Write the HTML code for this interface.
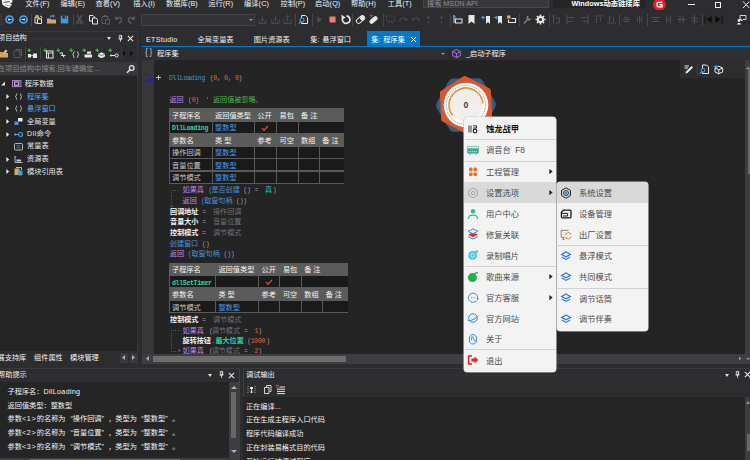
<!DOCTYPE html>
<html><head><meta charset="utf-8">
<style>
*{box-sizing:border-box;margin:0;padding:0}
html,body{width:750px;height:460px;overflow:hidden;background:#2d2d30}
body{position:relative;font-family:"Liberation Sans","Noto Sans CJK SC",sans-serif;font-size:7.2px;color:#f1f1f1;line-height:1}
.a{position:absolute;white-space:nowrap}
.t{position:absolute;white-space:nowrap;line-height:10px;height:10px}
.mono{font-family:"Liberation Mono","Noto Sans CJK SC",monospace;font-size:6.5px;letter-spacing:-0.3px}
.sep{position:absolute;width:1px;background:#46464a;height:12px}
svg{position:absolute;overflow:visible}
</style></head><body>

<div id="menubar" class="a" style="left:0;top:0;width:750px;height:10px;background:#2d2d30">
 <svg style="left:0;top:0" width="14" height="9" viewBox="0 0 14 9"><path d="M1.8 0 L12.4 0 L12.3 2.6 L9.8 3.3 L12 4.6 L9.2 8 L5 6.6 L2.3 4.4Z" fill="#f6f6f6"/><path d="M3.6 2.4 L9.8 1.7" stroke="#2d2d30" stroke-width="0.9"/><path d="M5 5 L10.6 5.6" stroke="#2d2d30" stroke-width="0.4"/></svg>
 <span class="t" style="left:25.3px;top:-1.3px;letter-spacing:0.12px">文件(F)</span>
 <span class="t" style="left:60.5px;top:-1.3px;letter-spacing:0.12px">编辑(E)</span>
 <span class="t" style="left:95.5px;top:-1.3px;letter-spacing:0.12px">查看(V)</span>
 <span class="t" style="left:133.3px;top:-1.3px;letter-spacing:0.12px">插入(I)</span>
 <span class="t" style="left:166px;top:-1.3px;letter-spacing:0.12px">数据库(B)</span>
 <span class="t" style="left:208.2px;top:-1.3px;letter-spacing:0.12px">运行(R)</span>
 <span class="t" style="left:244px;top:-1.3px;letter-spacing:0.12px">编译(C)</span>
 <span class="t" style="left:280.6px;top:-1.3px;letter-spacing:0.12px">控制(P)</span>
 <span class="t" style="left:315px;top:-1.3px;letter-spacing:0.12px">启动(Q)</span>
 <span class="t" style="left:351px;top:-1.3px;letter-spacing:0.12px">帮助(H)</span>
 <span class="t" style="left:387.7px;top:-1.3px;letter-spacing:0.12px">工具(T)</span>
 <div class="a" style="left:423px;top:-2px;width:126px;height:10px;background:#38383c;border:1px solid #47474b"></div>
 <span class="t" style="left:427px;top:-1.3px;color:#8f8f92">搜索 MSDN API</span>
 <div class="a" style="left:553px;top:0;width:93px;height:8px;background:#252527"></div>
 <span class="t" style="left:571.5px;top:-1.5px;font-weight:bold;color:#fff;font-size:7.3px">Windows动态链接库</span>
 <svg style="left:653px;top:-2px" width="13" height="13" viewBox="0 0 13 13"><circle cx="6.5" cy="6.5" r="6.4" fill="#e5202a"/><path d="M9.2 4.4 L5.2 4.4 Q4 4.4 4 5.6 L4 7.6 Q4 8.8 5.2 8.8 L9 8.8 L9 6.6 L6.4 6.6" fill="none" stroke="#fff" stroke-width="1.3"/></svg>
 <div class="a" style="left:687.5px;top:4px;width:7px;height:1px;background:#f1f1f1"></div>
 <div class="a" style="left:714.5px;top:1.5px;width:6.5px;height:6px;border:1px solid #f1f1f1"></div>
 <svg style="left:742px;top:1px" width="8" height="8" viewBox="0 0 8 8"><path d="M1 0.5 L7.5 7 M7.5 0.5 L1 7" stroke="#f1f1f1" stroke-width="1"/></svg>
</div>

<div id="toolbar" class="a" style="left:0;top:10px;width:750px;height:21px;background:#2d2d30">
<div class="a" style="left:0.5px;top:4px;width:1px;height:11px;background:repeating-linear-gradient(#5a5a5e 0 1px,transparent 1px 2px)"></div>
<svg style="left:4.2px;top:3.5px" width="11" height="11" viewBox="0 0 11 11"><circle cx="5.5" cy="5.5" r="3.5" fill="#1c2a3a" stroke="#4fa6ee" stroke-width="1.7"/><path d="M4 5.5 L7.4 5.5 M5.4 4.2 L4 5.5 L5.4 6.8" stroke="#e8f4ff" stroke-width="0.9" fill="none"/></svg>
<svg style="left:17.5px;top:3.5px" width="11" height="11" viewBox="0 0 11 11"><circle cx="5.5" cy="5.5" r="3.5" fill="#1c2a3a" stroke="#4fa6ee" stroke-width="1.7"/><path d="M3.6 5.5 L7 5.5 M5.6 4.2 L7 5.5 L5.6 6.8" stroke="#e8f4ff" stroke-width="0.9" fill="none"/></svg>
<div class="sep" style="left:31px;top:3.5px"></div>
<svg style="left:33.0px;top:3.5px" width="11" height="11" viewBox="0 0 11 11"><path d="M2 3.5 L6 3.5 L6 9 L2 9 Z" fill="none" stroke="#e8e8e8" stroke-width="1"/><path d="M4.5 5 L8.5 5 L8.5 9.5 L4.5 9.5Z" fill="#2d2d30" stroke="#e8e8e8" stroke-width="1"/><circle cx="4" cy="2.6" r="1.8" fill="#dca65a"/><path d="M7 2 L9 3.2 L8.4 4.6" stroke="#e8e8e8" fill="none" stroke-width="0.9"/></svg>
<svg style="left:45.5px;top:3.5px" width="11" height="11" viewBox="0 0 11 11"><path d="M1 4.5 L4 4.5 L5 5.5 L10 5.5 L10 9.5 L1 9.5 Z" fill="#dca65a"/><path d="M4.5 3.5 L4.5 2 L8 2 M6.8 0.8 L8.2 2 L6.8 3.2" stroke="#3f9ae8" stroke-width="1.1" fill="none"/></svg>
<svg style="left:59.0px;top:3.5px" width="11" height="11" viewBox="0 0 11 11"><path d="M1.8 1.8 L9.2 1.8 L9.2 9.4 L1.8 9.4 Z" fill="#3f9ae8"/><rect x="3.4" y="1.8" width="4.2" height="2.8" fill="#2d2d30"/><rect x="5.8" y="2.2" width="1.2" height="1.9" fill="#3f9ae8"/></svg>
<div class="sep" style="left:72.5px;top:3.5px"></div>
<svg style="left:74.0px;top:3.5px" width="11" height="11" viewBox="0 0 11 11"><path d="M3 1 L7 7.5 M8 1 L4 7.5" stroke="#5e5e62" stroke-width="1.1"/><circle cx="3.5" cy="8.6" r="1.3" fill="none" stroke="#5e5e62"/><circle cx="7.5" cy="8.6" r="1.3" fill="none" stroke="#5e5e62"/></svg>
<svg style="left:87.5px;top:3.5px" width="11" height="11" viewBox="0 0 11 11"><path d="M1.5 1.5 L5 1.5 L6.5 3 L6.5 7 L1.5 7 Z" fill="#2d2d30" stroke="#e8e8e8" stroke-width="1"/><path d="M4.5 4 L8 4 L9.5 5.5 L9.5 10 L4.5 10 Z" fill="#2d2d30" stroke="#e8e8e8" stroke-width="1"/></svg>
<svg style="left:99.9px;top:3.5px" width="11" height="11" viewBox="0 0 11 11"><path d="M2 2.5 L8 2.5 L8 9.5 L2 9.5Z" fill="none" stroke="#5e5e62" stroke-width="1"/><rect x="3.8" y="1" width="2.6" height="2" fill="#5e5e62"/><rect x="5.5" y="5.5" width="4" height="4.5" fill="#2d2d30" stroke="#5e5e62" stroke-width="0.9"/></svg>
<svg style="left:113.3px;top:3.5px" width="11" height="11" viewBox="0 0 11 11"><path d="M3 5 C5 2.5 9 3.5 8.5 6.5 C8.2 8 7 9 5.5 9.5" fill="none" stroke="#5e5e62" stroke-width="1.3"/><path d="M2 2 L2.4 6 L6 5.2Z" fill="#5e5e62"/></svg>
<svg style="left:126.0px;top:3.5px" width="11" height="11" viewBox="0 0 11 11"><path d="M8 5 C6 2.5 2 3.5 2.5 6.5 C2.8 8 4 9 5.5 9.5" fill="none" stroke="#5e5e62" stroke-width="1.3"/><path d="M9 2 L8.6 6 L5 5.2Z" fill="#5e5e62"/></svg>
<div class="a" style="left:141px;top:3.5px;width:114px;height:12px;background:#333337;border:1px solid #434346"></div>
<div class="a" style="left:249px;top:8.5px;border:2px solid transparent;border-top:2.5px solid #999;width:0;height:0"></div>
<svg style="left:257.1px;top:3.5px" width="11" height="11" viewBox="0 0 11 11"><path d="M1.8 5.2 L1.8 9.6 L9.2 9.6 L9.2 5.2 M3.6 9.6 L3.6 7.6 M7.4 9.6 L7.4 7.6 M5.5 9.6 L5.5 8.2" stroke="#4e4e52" stroke-width="0.9" fill="none"/><path d="M5.5 1.2 L5.5 6.6 M3.9 5 L5.5 6.6 L7.1 5" stroke="#4e4e52" stroke-width="0.9" fill="none"/></svg>
<svg style="left:269.5px;top:3.5px" width="11" height="11" viewBox="0 0 11 11"><path d="M1.8 5.2 L1.8 9.6 L9.2 9.6 L9.2 5.2 M3.6 9.6 L3.6 7.6 M7.4 9.6 L7.4 7.6 M5.5 9.6 L5.5 8.2" stroke="#4e4e52" stroke-width="0.9" fill="none"/><path d="M5.5 1.2 L5.5 6.6 M3.9 5 L5.5 6.6 L7.1 5" stroke="#4e4e52" stroke-width="0.9" fill="none"/></svg>
<svg style="left:281.8px;top:3.5px" width="11" height="11" viewBox="0 0 11 11"><path d="M1.8 5.2 L1.8 9.6 L9.2 9.6 L9.2 5.2 M3.6 9.6 L3.6 7.6 M7.4 9.6 L7.4 7.6 M5.5 9.6 L5.5 8.2" stroke="#4e4e52" stroke-width="0.9" fill="none"/><path d="M5.5 6.8 L5.5 1.4 M3.9 3 L5.5 1.4 L7.1 3" stroke="#4e4e52" stroke-width="0.9" fill="none"/></svg>
<div class="sep" style="left:294.6px;top:3.5px"></div>
<svg style="left:297.5px;top:3.5px" width="11" height="11" viewBox="0 0 11 11"><path d="M3.5 1.5 L7.5 1.5 L9.5 3.5 L9.5 9.5 L3.5 9.5Z" fill="none" stroke="#e8e8e8" stroke-width="1"/><circle cx="4" cy="6" r="2" fill="#2d2d30" stroke="#3f9ae8" stroke-width="1.1"/><path d="M2.6 7.6 L0.8 9.6" stroke="#3f9ae8" stroke-width="1.2"/></svg>
<div class="sep" style="left:312px;top:3.5px"></div>
<svg style="left:313.5px;top:3.5px" width="11" height="11" viewBox="0 0 11 11"><path d="M3.4 2.2 L8 5.5 L3.4 8.8Z" fill="#505054"/></svg>
<svg style="left:326.9px;top:3.5px" width="11" height="11" viewBox="0 0 11 11"><rect x="2.5" y="2.5" width="6" height="6" fill="#f0806c"/></svg>
<svg style="left:339.5px;top:3.5px" width="11" height="11" viewBox="0 0 11 11"><path d="M3.2 3.2 A3.8 3.8 0 1 0 6.5 1.8" fill="none" stroke="#e8e8e8" stroke-width="1.7"/><path d="M1.4 0.6 L1.8 5 L5.8 3.8Z" fill="#e8e8e8"/></svg>
<div class="sep" style="left:352px;top:3.5px"></div>
<svg style="left:354.5px;top:3.5px" width="11" height="11" viewBox="0 0 11 11"><g transform="rotate(-40 5.5 5.5)"><rect x="0.8" y="3.3" width="9.4" height="4.4" rx="2.2" fill="none" stroke="#e8e8e8" stroke-width="1"/><rect x="5.5" y="3.3" width="4.7" height="4.4" rx="2" fill="#e8e8e8"/></g></svg>
<svg style="left:367.5px;top:3.5px" width="11" height="11" viewBox="0 0 11 11"><g transform="rotate(-40 5.5 6)"><rect x="0.8" y="3.8" width="9.4" height="4.4" rx="2.2" fill="#e8e8e8"/></g><path d="M2.2 0.8 L5 3.4 M5 0.8 L2.2 3.4" stroke="#e04a3a" stroke-width="1.1"/></svg>
<div class="sep" style="left:383px;top:3.5px"></div>
<svg style="left:384.5px;top:3.5px" width="11" height="11" viewBox="0 0 11 11"><rect x="1.5" y="2" width="8" height="5" fill="none" stroke="#4c4c50" stroke-width="1" stroke-dasharray="1.5 1"/><path d="M3 9 L5.5 7.5 L8 9" stroke="#4c4c50" fill="none"/></svg>
<svg style="left:397.5px;top:3.5px" width="11" height="11" viewBox="0 0 11 11"><path d="M1.5 7 C2.5 3.5 7 3 8.5 6" fill="none" stroke="#4c4c50" stroke-width="1.1"/><path d="M9.5 4 L9 7 L6.5 6Z" fill="#4c4c50"/></svg>
<svg style="left:410.0px;top:3.5px" width="11" height="11" viewBox="0 0 11 11"><path d="M9.5 7 C8.5 3.5 4 3 2.5 6" fill="none" stroke="#4c4c50" stroke-width="1.1"/><path d="M1.5 4 L2 7 L4.5 6Z" fill="#4c4c50"/></svg>
<svg style="left:422.5px;top:3.5px" width="11" height="11" viewBox="0 0 11 11"><path d="M5.5 2.5 L5.5 5 M4 4 L5.5 2.3 L7 4" stroke="#4c4c50" fill="none"/><circle cx="5.5" cy="8" r="1" fill="#4c4c50"/></svg>
<svg style="left:436.1px;top:3.5px" width="11" height="11" viewBox="0 0 11 11"><path d="M5.5 2.5 L5.5 5 M4 4 L5.5 2.3 L7 4" stroke="#4c4c50" fill="none"/><circle cx="5.5" cy="8" r="1" fill="#4c4c50"/></svg>
<div class="sep" style="left:449.7px;top:3.5px"></div>
<svg style="left:451.5px;top:3.5px" width="11" height="11" viewBox="0 0 11 11"><path d="M2 1 L2 9" stroke="#e8e8e8" stroke-width="0.9"/><rect x="3.5" y="5" width="6.5" height="4" fill="none" stroke="#e8e8e8" stroke-width="1"/><path d="M1 1 L4.5 3 L1 4.5Z" fill="#3f9ae8"/></svg>
<svg style="left:466.2px;top:3.5px" width="11" height="11" viewBox="0 0 11 11"><path d="M2.5 1 L8.5 1 L8.5 10 L5.5 7.4 L2.5 10Z" fill="#e8e8e8"/></svg>
<svg style="left:480.5px;top:3.5px" width="11" height="11" viewBox="0 0 11 11"><path d="M5 2 L9 2 L9 10 L7 8 L5 10Z" fill="#e8e8e8"/><path d="M1 3.5 L4.2 3.5 M2.6 1.8 L1 3.5 L2.6 5.2" stroke="#3f9ae8" stroke-width="1.2" fill="none"/></svg>
<svg style="left:493.1px;top:3.5px" width="11" height="11" viewBox="0 0 11 11"><path d="M5 2 L9 2 L9 10 L7 8 L5 10Z" fill="#e8e8e8"/><path d="M1 3.5 L4.2 3.5 M2.8 1.8 L4.4 3.5 L2.8 5.2" stroke="#3f9ae8" stroke-width="1.2" fill="none"/></svg>
<svg style="left:506.2px;top:3.5px" width="11" height="11" viewBox="0 0 11 11"><rect x="1" y="1.5" width="3.5" height="3" fill="#dca65a"/><path d="M2.5 5.5 L2.5 8.5 L9.5 8.5 L9.5 4.5 L5.5 4.5" fill="none" stroke="#e8e8e8" stroke-width="1.1"/></svg>
<div class="sep" style="left:519px;top:3.5px"></div>
<svg style="left:521.5px;top:3.5px" width="11" height="11" viewBox="0 0 11 11"><path d="M2 9.5 L6 5 " stroke="#7a7a7e" stroke-width="1.6"/><path d="M6.5 1.5 A2.6 2.6 0 1 0 9.5 4.5 L7.8 5 L6.3 3.5Z" fill="#7a7a7e"/></svg>
<svg style="left:534.5px;top:3.5px" width="11" height="11" viewBox="0 0 11 11"><circle cx="5.5" cy="5.5" r="2.6" fill="none" stroke="#e8e8e8" stroke-width="2"/><g stroke="#e8e8e8" stroke-width="1.6"><path d="M5.5 0.5 L5.5 10.5 M0.5 5.5 L10.5 5.5 M2 2 L9 9 M9 2 L2 9" stroke-dasharray="1.6 6.8 1.6 0"/></g></svg>
<div class="sep" style="left:548.5px;top:3.5px"></div>
<svg style="left:549.5px;top:3.5px" width="11" height="11" viewBox="0 0 11 11"><path d="M2 2 L5 2 M3.5 2 L3.5 9 M5.5 4 L9.5 4 L9.5 9 L5.5 9" stroke="#4f4f53" fill="none"/></svg>
<svg style="left:565.1px;top:3.5px" width="11" height="11" viewBox="0 0 11 11"><path d="M2 1 L2 10 M3.5 3.5 L9.5 3.5 M3.5 7.5 L7.5 7.5" stroke="#4f4f53" stroke-width="1.1"/></svg>
<svg style="left:579.1px;top:3.5px" width="11" height="11" viewBox="0 0 11 11"><path d="M9 1 L9 10 M7.5 3.5 L1.5 3.5 M7.5 7.5 L3.5 7.5" stroke="#4f4f53" stroke-width="1.1"/></svg>
<svg style="left:592.5px;top:3.5px" width="11" height="11" viewBox="0 0 11 11"><path d="M1 2 L10 2 M3.5 3.5 L3.5 9.5 M7.5 3.5 L7.5 7.5" stroke="#4f4f53" stroke-width="1.1"/></svg>
<svg style="left:605.9px;top:3.5px" width="11" height="11" viewBox="0 0 11 11"><path d="M1 9 L10 9 M3.5 7.5 L3.5 1.5 M7.5 7.5 L7.5 3.5" stroke="#4f4f53" stroke-width="1.1"/></svg>
<div class="sep" style="left:619px;top:3.5px"></div>
<svg style="left:620.9px;top:3.5px" width="11" height="11" viewBox="0 0 11 11"><path d="M1.5 5.5 L9.5 5.5 M3 3.5 L8 3.5 M3 7.5 L8 7.5" stroke="#4f4f53" stroke-width="1"/></svg>
<svg style="left:633.8px;top:3.5px" width="11" height="11" viewBox="0 0 11 11"><path d="M5.5 1.5 L5.5 9.5 M3.5 3 L3.5 8 M7.5 3 L7.5 8" stroke="#4f4f53" stroke-width="1"/></svg>
<div class="sep" style="left:647.4px;top:3.5px"></div>
<svg style="left:650.0px;top:3.5px" width="11" height="11" viewBox="0 0 11 11"><path d="M1.5 3.5 L9.5 3.5 M1.5 7.5 L9.5 7.5 M4 5.5 L7 5.5" stroke="#4f4f53" stroke-width="1.1"/></svg>
<svg style="left:662.5px;top:3.5px" width="11" height="11" viewBox="0 0 11 11"><path d="M3.5 1.5 L3.5 9.5 M7.5 1.5 L7.5 9.5 M5.5 4 L5.5 7" stroke="#4f4f53" stroke-width="1.1"/></svg>
<svg style="left:675.5px;top:3.5px" width="11" height="11" viewBox="0 0 11 11"><path d="M1 5.5 L10 5.5 M4 2 L4 9 M7 2 L7 9" stroke="#4f4f53" stroke-width="1.1"/></svg>
<svg style="left:688.8px;top:3.5px" width="11" height="11" viewBox="0 0 11 11"><path d="M5.5 1 L5.5 10 M2 4 L9 4 M2 7 L9 7" stroke="#4f4f53" stroke-width="1.1"/></svg>
<div class="sep" style="left:702.4px;top:3.5px"></div>
<svg style="left:703.2px;top:3.5px" width="11" height="11" viewBox="0 0 11 11"><path d="M2 1.5 L2 9.5" stroke="#101010" stroke-width="1"/><path d="M3.5 5.5 L8.5 2 L8.5 9Z" fill="#0c0c0c"/></svg>
<svg style="left:712.8px;top:3.5px" width="11" height="11" viewBox="0 0 11 11"><path d="M9 1.5 L9 9.5" stroke="#101010" stroke-width="1"/><path d="M7.5 5.5 L2.5 2 L2.5 9Z" fill="#0c0c0c"/></svg>
<svg style="left:735.5px;top:3.5px" width="11" height="11" viewBox="0 0 11 11"><path d="M4 1.5 L10 1.5 L10 5.5 L7 5.5 L5.5 7 L5.5 5.5 L4 5.5Z" fill="none" stroke="#e8e8e8" stroke-width="0.9"/><circle cx="3" cy="6.5" r="1.4" fill="#e8e8e8"/><path d="M0.8 10.5 C1 8.5 5 8.5 5.2 10.5Z" fill="#e8e8e8"/></svg>
</div>
<div id="left" class="a" style="left:0;top:31px;width:138px;height:334px;background:#2d2d30">
<div class="a" style="left:0;top:0;width:138px;height:1px;background:#3a3a3e"></div>
<div class="a" style="left:137px;top:0;width:1px;height:334px;background:#39393d"></div>
<span class="t" style="left:-2px;top:2.3999999999999986px">项目结构</span>
<div class="a" style="left:30px;top:6px;width:74px;height:3px;background:repeating-linear-gradient(90deg,#46464a 0 1px,transparent 1px 2px);opacity:.45"></div>
<div class="a" style="left:106.5px;top:6px;border:2.5px solid transparent;border-top:3px solid #e0e0e0;width:0;height:0"></div>
<svg style="left:114.5px;top:1.5px" width="11" height="11" viewBox="0 0 11 11"><path d="M4.3 2.4 L6.7 2.4 L6.7 6 L4.3 6Z M3.6 6 L7.4 6 M5.5 6 L5.5 8.8" stroke="#e8e8e8" stroke-width="0.8" fill="none"/><path d="M6.2 2.4 L6.2 6" stroke="#e8e8e8" stroke-width="0.9"/></svg>
<svg style="left:125.0px;top:1.5px" width="11" height="11" viewBox="0 0 11 11"><path d="M2.9 2.9 L8.1 8.1 M8.1 2.9 L2.9 8.1" stroke="#e8e8e8" stroke-width="1.05"/></svg>
<svg style="left:-1.5px;top:16.5px" width="11" height="11" viewBox="0 0 11 11"><path d="M0 4 L3 4 L4 5 L9 5 L9 9.5 L0 9.5Z" fill="#dca65a"/><path d="M4 4.5 L7 1.5 L8.5 3 L5.5 6Z" fill="#f0c78a"/></svg>
<svg style="left:11.5px;top:16.5px" width="11" height="11" viewBox="0 0 11 11"><path d="M2 3 L8 3 L8 9.5 L2 9.5Z" fill="none" stroke="#5a5a5e"/><path d="M3.5 1.5 L9.5 1.5 L9.5 8" fill="none" stroke="#5a5a5e"/></svg>
<div class="sep" style="left:24.5px;top:16px;height:12px"></div>
<svg style="left:26.5px;top:16.5px" width="11" height="11" viewBox="0 0 11 11"><path d="M2.2 0.6 L2.2 4 M0.5 2.3 L3.9 2.3" stroke="#3fb950" stroke-width="1.2"/><rect x="1" y="6" width="3" height="3.5" fill="#e8e8e8"/><rect x="6" y="5.5" width="4" height="4.5" fill="#e8e8e8"/><path d="M4 7.7 L6 7.7" stroke="#e8e8e8"/></svg>
<div class="sep" style="left:40px;top:16px;height:12px"></div>
<svg style="left:42.5px;top:16.5px" width="11" height="11" viewBox="0 0 11 11"><path d="M2.2 0.6 L2.2 4 M0.5 2.3 L3.9 2.3" stroke="#3fb950" stroke-width="1.2"/><rect x="3.5" y="3" width="6.5" height="7" fill="none" stroke="#e8e8e8" stroke-width="1"/><path d="M3.5 5 L10 5 M5.5 5 L5.5 10" stroke="#e8e8e8" stroke-width="0.9"/></svg>
<svg style="left:55.5px;top:16.5px" width="11" height="11" viewBox="0 0 11 11"><path d="M2.2 0.6 L2.2 4 M0.5 2.3 L3.9 2.3" stroke="#3fb950" stroke-width="1.2"/><path d="M3.5 5 L7 5 M5 7.5 L9.5 7.5 M6 5 L8 9.5" stroke="#e8e8e8" stroke-width="1"/></svg>
<svg style="left:68.5px;top:16.5px" width="11" height="11" viewBox="0 0 11 11"><path d="M2.2 0.6 L2.2 4 M0.5 2.3 L3.9 2.3" stroke="#3fb950" stroke-width="1.2"/><path d="M5.5 3.5 C4.2 3.5 5 6 3.8 6.5 C5 7 4.2 9.8 5.5 9.8 M8 3.5 C9.3 3.5 8.5 6 9.7 6.5 C8.5 7 9.3 9.8 8 9.8" stroke="#e8e8e8" stroke-width="0.9" fill="none"/></svg>
<svg style="left:81.5px;top:16.5px" width="11" height="11" viewBox="0 0 11 11"><path d="M2.2 0.6 L2.2 4 M0.5 2.3 L3.9 2.3" stroke="#3fb950" stroke-width="1.2"/><rect x="2.5" y="6.5" width="7.5" height="3" fill="#e8e8e8"/><rect x="5" y="3.5" width="4" height="2.2" fill="#e8e8e8"/></svg>
<svg style="left:94.5px;top:16.5px" width="11" height="11" viewBox="0 0 11 11"><path d="M2.2 0.6 L2.2 4 M0.5 2.3 L3.9 2.3" stroke="#3fb950" stroke-width="1.2"/><path d="M3 6 L6.5 4.2 L10 6 L10 8.4 L6.5 10.2 L3 8.4Z" fill="#e8e8e8"/><path d="M3 6 L6.5 7.6 L10 6" stroke="#2d2d30" stroke-width="0.6" fill="none"/></svg>
<svg style="left:107.5px;top:16.5px" width="11" height="11" viewBox="0 0 11 11"><path d="M2.2 0.6 L2.2 4 M0.5 2.3 L3.9 2.3" stroke="#3fb950" stroke-width="1.2"/><circle cx="8.6" cy="7.5" r="1.6" fill="none" stroke="#e8e8e8" stroke-width="1"/><circle cx="3" cy="7.5" r="1" fill="#e8e8e8"/><path d="M3 7.5 L7 7.5" stroke="#e8e8e8" stroke-width="1"/></svg>
<div class="sep" style="left:121px;top:16px;height:12px;background:#3c3c40"></div>
<svg style="left:118.3px;top:16.5px" width="11" height="11" viewBox="0 0 11 11"><path d="M7 3 L4 5.5 L7 8Z" fill="#0a0a0a"/></svg>
<svg style="left:126.0px;top:16.5px" width="11" height="11" viewBox="0 0 11 11"><path d="M4 3 L7 5.5 L4 8Z" fill="#0a0a0a"/></svg>
<div class="a" style="left:0;top:31.299999999999997px;width:137px;height:12.6px;background:#38383c"></div>
<span class="t" style="left:-2px;top:33px;color:#8a8a8e">在项目结构中搜索,回车键确定...</span>
<svg style="left:124.5px;top:32.5px" width="11" height="11" viewBox="0 0 11 11"><circle cx="6.7" cy="4" r="2.3" fill="none" stroke="#e8e8e8" stroke-width="1.3"/><path d="M5 5.8 L2 8.8" stroke="#e8e8e8" stroke-width="1.5"/></svg>
<div class="a" style="left:0;top:44.5px;width:137px;height:275.5px;background:#252526"></div>
<svg style="left:-2.0px;top:47.3px" width="11" height="11" viewBox="0 0 11 11"><path d="M7 3.6 L7 7.4 L3.2 7.4Z" fill="#e8e8e8"/></svg>
<svg style="left:10.5px;top:47.3px" width="11" height="11" viewBox="0 0 11 11"><rect x="1.5" y="2.6" width="8.4" height="6" fill="none" stroke="#b180d7" stroke-width="1"/><rect x="3.6" y="4" width="4.2" height="3.2" fill="none" stroke="#e8e8e8" stroke-width="0.9"/></svg>
<span class="t" style="left:24.8px;top:47.8px;color:#e8e8e8">程序数据</span>
<svg style="left:1.5px;top:60.0px" width="11" height="11" viewBox="0 0 11 11"><path d="M4.4 3 L7.2 5.5 L4.4 8Z" fill="#e8e8e8"/></svg>
<svg style="left:12.5px;top:60.0px" width="11" height="11" viewBox="0 0 11 11"><path d="M4.2 2.4 C3 2.4 3.8 5.2 2.4 5.5 C3.8 5.8 3 8.8 4.2 8.8 M7 2.4 C8.2 2.4 7.4 5.2 8.8 5.5 C7.4 5.8 8.2 8.8 7 8.8" stroke="#c0c0c0" stroke-width="0.95" fill="none"/></svg>
<span class="t" style="left:27px;top:60.5px;color:#5aa6f8">程序集</span>
<svg style="left:1.5px;top:72.3px" width="11" height="11" viewBox="0 0 11 11"><path d="M4.4 3 L7.2 5.5 L4.4 8Z" fill="#e8e8e8"/></svg>
<svg style="left:12.5px;top:72.3px" width="11" height="11" viewBox="0 0 11 11"><path d="M4.2 2.4 C3 2.4 3.8 5.2 2.4 5.5 C3.8 5.8 3 8.8 4.2 8.8 M7 2.4 C8.2 2.4 7.4 5.2 8.8 5.5 C7.4 5.8 8.2 8.8 7 8.8" stroke="#c0c0c0" stroke-width="0.95" fill="none"/></svg>
<span class="t" style="left:27px;top:72.8px;color:#5aa6f8">悬浮窗口</span>
<svg style="left:1.5px;top:85.0px" width="11" height="11" viewBox="0 0 11 11"><path d="M4.4 3 L7.2 5.5 L4.4 8Z" fill="#e8e8e8"/></svg>
<svg style="left:12.5px;top:85.0px" width="11" height="11" viewBox="0 0 11 11"><path d="M5 2 L9.5 2 L9.5 5.5 L5 5.5Z" fill="#e8e8e8"/><path d="M1.5 5.5 L5.5 5.5 L5.5 9 L1.5 9Z" fill="#3f9ae8"/></svg>
<span class="t" style="left:27px;top:85.5px;color:#e8e8e8">全局变量</span>
<svg style="left:1.5px;top:97.5px" width="11" height="11" viewBox="0 0 11 11"><path d="M4.4 3 L7.2 5.5 L4.4 8Z" fill="#e8e8e8"/></svg>
<svg style="left:12.5px;top:97.5px" width="11" height="11" viewBox="0 0 11 11"><circle cx="7.5" cy="5.5" r="2" fill="none" stroke="#3f9ae8" stroke-width="1.2"/><circle cx="2.3" cy="5.5" r="1.2" fill="#3f9ae8"/><path d="M2 5.5 L6 5.5" stroke="#3f9ae8" stroke-width="1"/></svg>
<span class="t" style="left:27px;top:98px;color:#e8e8e8"><span style="letter-spacing:0.45px">Dll</span>命令</span>
<svg style="left:12.5px;top:109.9px" width="11" height="11" viewBox="0 0 11 11"><rect x="1.5" y="2.5" width="8" height="6.5" rx="1" fill="none" stroke="#c8c8c8" stroke-width="0.9"/><path d="M3.5 4.8 L7.5 4.8 M3.5 6.8 L7.5 6.8" stroke="#3f9ae8" stroke-width="0.8"/></svg>
<span class="t" style="left:27px;top:110.4px;color:#e8e8e8">常量表</span>
<svg style="left:1.5px;top:122.5px" width="11" height="11" viewBox="0 0 11 11"><path d="M4.4 3 L7.2 5.5 L4.4 8Z" fill="#e8e8e8"/></svg>
<svg style="left:12.5px;top:122.5px" width="11" height="11" viewBox="0 0 11 11"><path d="M2 2 L2 8.5 L9.5 8.5" stroke="#c8c8c8" stroke-width="0.9" fill="none"/><path d="M3.5 5.5 L8 5.5 L8 7.5 L3.5 7.5Z" fill="#c8c8c8"/><path d="M1 2.8 L3.6 2 L2.6 4Z" fill="#3f9ae8"/></svg>
<span class="t" style="left:27px;top:123px;color:#e8e8e8">资源表</span>
<svg style="left:1.5px;top:135.0px" width="11" height="11" viewBox="0 0 11 11"><path d="M4.4 3 L7.2 5.5 L4.4 8Z" fill="#e8e8e8"/></svg>
<svg style="left:12.5px;top:135.0px" width="11" height="11" viewBox="0 0 11 11"><rect x="1.5" y="2.5" width="5" height="6.5" fill="#dca65a"/><rect x="5" y="4.5" width="4.5" height="5" rx="1" fill="#3f9ae8"/><path d="M3 1.5 L8.5 1.5 L8.5 4" stroke="#c8c8c8" stroke-width="0.9" fill="none"/></svg>
<span class="t" style="left:27px;top:135.5px;color:#e8e8e8">模块引用表</span>
<span class="t" style="left:-2.5px;top:322.2px">展支持库</span>
<span class="t" style="left:34px;top:322.2px">组件属性</span>
<span class="t" style="left:70px;top:322.2px">模块管理</span>
<div class="a" style="left:119.5px;top:321.5px;width:8.5px;height:10.5px;background:#3a3a3e"></div>
<div class="a" style="left:129.5px;top:321.5px;width:8.5px;height:10.5px;background:#3a3a3e"></div>
<svg style="left:118.2px;top:321.2px" width="11" height="11" viewBox="0 0 11 11"><path d="M7 3 L4 5.5 L7 8Z" fill="#b0b0b0"/></svg>
<svg style="left:128.2px;top:321.2px" width="11" height="11" viewBox="0 0 11 11"><path d="M4 3 L7 5.5 L4 8Z" fill="#b0b0b0"/></svg>
</div>
<div id="main" class="a" style="left:142px;top:31px;width:608px;height:334px;background:#2d2d30;overflow:hidden">
<div class="a" style="left:224.6px;top:0.4px;width:53.6px;height:15.2px;background:#007acc"></div>
<div class="a" style="left:0;top:15px;width:608px;height:1.2px;background:#007acc"></div>
<span class="t" style="left:4px;top:3.9000000000000004px;letter-spacing:0.25px">ETStudio</span>
<span class="t" style="left:55.6px;top:3.9000000000000004px;">全局变量表</span>
<span class="t" style="left:111.8px;top:3.9000000000000004px;">图片资源表</span>
<span class="t" style="left:168.3px;top:3.9000000000000004px;word-spacing:0.8px">集: 悬浮窗口</span>
<span class="t" style="left:229.3px;top:3.9000000000000004px;color:#fff;word-spacing:0.8px">集: 程序集</span>
<svg style="left:265.9px;top:3.2px" width="11" height="11" viewBox="0 0 11 11"><path d="M3 3 L8 8 M8 3 L3 8" stroke="#fff" stroke-width="1"/></svg>
<div class="a" style="left:0;top:16.2px;width:608px;height:13.2px;background:#2f2f33"></div>
<span class="t" style="left:3px;top:17.3px;color:#d0d0d0;letter-spacing:-0.2px;font-size:8.2px">{ }</span>
<span class="t" style="left:15px;top:17.5px;">程序集</span>
<div class="a" style="left:299px;top:21.5px;border:2px solid transparent;border-top:2.5px solid #999;width:0;height:0"></div>
<div class="a" style="left:307px;top:17px;width:1px;height:12px;background:#222"></div>
<svg style="left:308.5px;top:17.0px" width="11" height="11" viewBox="0 0 11 11"><path d="M5.5 1.5 L9.3 3.5 L9.3 7.7 L5.5 9.7 L1.7 7.7 L1.7 3.5Z M1.7 3.5 L5.5 5.5 L9.3 3.5 M5.5 5.5 L5.5 9.7" stroke="#a074d6" stroke-width="1" fill="none"/></svg>
<span class="t" style="left:324px;top:17.5px;">_启动子程序</span>
<div class="a" style="left:0;top:29.4px;width:608px;height:293.6px;background:#242425"></div>
<div class="a" style="left:0;top:29.4px;width:12px;height:293.6px;background:#38383a"></div>
<div class="a" style="left:538.4px;top:29.4px;width:65px;height:17.6px;background:#2d2d30"></div>
<svg style="left:541.0px;top:32.5px" width="11" height="11" viewBox="0 0 11 11"><path d="M1.5 2 L6 2 M1.5 4 L5 4" stroke="#e8e8e8" stroke-width="1.2"/><path d="M2.5 9.5 L3 7.5 L8.5 2 L10 3.5 L4.5 9Z" fill="#e8e8e8"/></svg>
<div class="a" style="left:554.5px;top:32.5px;width:1px;height:11px;background:#3e3e42"></div>
<svg style="left:556.5px;top:32.5px" width="11" height="11" viewBox="0 0 11 11"><path d="M3.5 1 L7.5 1 L9.5 3 L9.5 9.5 L3.5 9.5Z" fill="none" stroke="#e8e8e8" stroke-width="1"/><circle cx="4" cy="6.3" r="1.8" fill="#2d2d30" stroke="#3f9ae8" stroke-width="1.1"/><path d="M2.6 7.8 L0.8 9.8" stroke="#3f9ae8" stroke-width="1.2"/></svg>
<svg style="left:570.5px;top:32.5px" width="11" height="11" viewBox="0 0 11 11"><path d="M5.8 2.2 L9.6 4 L9.6 8 L5.8 9.8 L2 8 L2 4Z M2 4 L5.8 5.8 L9.6 4 M5.8 5.8 L5.8 9.8" stroke="#e8e8e8" stroke-width="1" fill="none"/><path d="M0.5 2.5 L4 2.5 M2.6 0.8 L4.2 2.5 L2.6 4.2" stroke="#3f9ae8" stroke-width="1" fill="none"/></svg>
<div class="a" style="left:603.2px;top:29.4px;width:4.8px;height:293.6px;background:#3e3e42"></div>
<div class="a" style="left:603.5px;top:33.5px;border:2.2px solid transparent;border-bottom:2.6px solid #999;width:0;height:0"></div>
<div class="a" style="left:605.8px;top:37.5px;width:2.2px;height:105.9px;background:#686868"></div>
<svg style="left:0.5px;top:41.3px" width="11" height="11" viewBox="0 0 11 11"><path d="M2 1.5 L4 1.5 L4 4 M2 9 L4 9 L4 6.5 M5 7 L9.5 7 L9.5 9 L5 9Z M6.5 3.2 L9 3.2" stroke="#1a1ad0" stroke-width="1.1" fill="none"/></svg>
<svg style="left:10.8px;top:41.1px" width="11" height="11" viewBox="0 0 11 11"><path d="M3 5.5 L8 5.5 M5.5 3 L5.5 8" stroke="#e0e0e0" stroke-width="0.8"/></svg>
<span class="t mono" style="left:27.0px;top:43.0px;color:#4a90d9">DllLoading</span>
<span class="t mono" style="left:67.7px;top:43.0px;color:#a0a0a0"><span style="color:#a0a0a0">(</span><span style="color:#e0643c">0</span><span style="color:#a0a0a0">, </span><span style="color:#e0643c">0</span><span style="color:#a0a0a0">, </span><span style="color:#e0643c">0</span><span style="color:#a0a0a0">)</span></span>
<span class="t" style="left:27.5px;top:63.99999999999999px;color:#c586e0;font-size:7.1px;">返回</span>
<span class="t mono" style="left:46.1px;top:65.0px;color:#a0a0a0"><span style="color:#a0a0a0">(</span><span style="color:#e0643c">0</span><span style="color:#a0a0a0">)</span></span>
<span class="t mono" style="left:63.4px;top:65.0px;color:#4db848">'</span>
<span class="t" style="left:71px;top:63.99999999999999px;color:#4db848;font-size:7.1px;">返回值被忽略。</span>
<div class="a" style="left:27px;top:77.3px;width:175.39999999999998px;height:75.3px;background:#5b5b5b"></div>
<span class="t" style="left:30px;top:79.5px;color:#f4f4f4">子程序名</span>
<span class="t" style="left:73px;top:79.5px;color:#f4f4f4">返回值类型</span>
<span class="t" style="left:115.3px;top:79.5px;color:#f4f4f4">公开</span>
<span class="t" style="left:137.5px;top:79.5px;color:#f4f4f4">易包</span>
<span class="t" style="left:159px;top:79.5px;color:#f4f4f4">备 注</span>
<div class="a" style="left:27.55px;top:90.5px;width:42.00px;height:11.4px;background:#1a1a1a"></div>
<div class="a" style="left:70.55px;top:90.5px;width:41.30px;height:11.4px;background:#1a1a1a"></div>
<div class="a" style="left:112.85px;top:90.5px;width:21.20px;height:11.4px;background:#1a1a1a"></div>
<div class="a" style="left:135.05px;top:90.5px;width:20.50px;height:11.4px;background:#1a1a1a"></div>
<div class="a" style="left:156.55px;top:90.5px;width:45.40px;height:11.4px;background:#1a1a1a"></div>
<span class="t" style="left:30px;top:92.1px"><span class="mono" style="color:#34d8a0;font-weight:bold;position:relative;top:0px">DllLoading</span></span>
<span class="t" style="left:73px;top:92.1px"><span style="color:#4a9bea">整数型</span></span>
<span class="t" style="left:115.3px;top:92.1px"><svg style="left:3.5px;top:1.5px" width="8" height="7" viewBox="0 0 8 7"><path d="M1 3 L3 5.2 L7 1" stroke="#e0443a" stroke-width="1.3" fill="none"/></svg></span>
<span class="t" style="left:30px;top:104.5px;color:#f4f4f4">参数名</span>
<span class="t" style="left:73px;top:104.5px;color:#f4f4f4">类 型</span>
<span class="t" style="left:115.3px;top:104.5px;color:#f4f4f4">参考</span>
<span class="t" style="left:137.5px;top:104.5px;color:#f4f4f4">可空</span>
<span class="t" style="left:159px;top:104.5px;color:#f4f4f4">数组</span>
<span class="t" style="left:180.3px;top:104.5px;color:#f4f4f4">备 注</span>
<div class="a" style="left:27.55px;top:115.5px;width:42.00px;height:11.4px;background:#1a1a1a"></div>
<div class="a" style="left:70.55px;top:115.5px;width:41.30px;height:11.4px;background:#1a1a1a"></div>
<div class="a" style="left:112.85px;top:115.5px;width:21.20px;height:11.4px;background:#1a1a1a"></div>
<div class="a" style="left:135.05px;top:115.5px;width:20.50px;height:11.4px;background:#1a1a1a"></div>
<div class="a" style="left:156.55px;top:115.5px;width:20.30px;height:11.4px;background:#1a1a1a"></div>
<div class="a" style="left:177.85px;top:115.5px;width:24.10px;height:11.4px;background:#1a1a1a"></div>
<span class="t" style="left:30px;top:117.1px"><span style="color:#c8c8c8">操作回调</span></span>
<span class="t" style="left:73px;top:117.1px"><span style="color:#4a9bea">整数型</span></span>
<div class="a" style="left:27.55px;top:128.0px;width:42.00px;height:11.4px;background:#1a1a1a"></div>
<div class="a" style="left:70.55px;top:128.0px;width:41.30px;height:11.4px;background:#1a1a1a"></div>
<div class="a" style="left:112.85px;top:128.0px;width:21.20px;height:11.4px;background:#1a1a1a"></div>
<div class="a" style="left:135.05px;top:128.0px;width:20.50px;height:11.4px;background:#1a1a1a"></div>
<div class="a" style="left:156.55px;top:128.0px;width:20.30px;height:11.4px;background:#1a1a1a"></div>
<div class="a" style="left:177.85px;top:128.0px;width:24.10px;height:11.4px;background:#1a1a1a"></div>
<span class="t" style="left:30px;top:129.6px"><span style="color:#c8c8c8">音量位置</span></span>
<span class="t" style="left:73px;top:129.6px"><span style="color:#4a9bea">整数型</span></span>
<div class="a" style="left:27.55px;top:140.5px;width:42.00px;height:11.4px;background:#1a1a1a"></div>
<div class="a" style="left:70.55px;top:140.5px;width:41.30px;height:11.4px;background:#1a1a1a"></div>
<div class="a" style="left:112.85px;top:140.5px;width:21.20px;height:11.4px;background:#1a1a1a"></div>
<div class="a" style="left:135.05px;top:140.5px;width:20.50px;height:11.4px;background:#1a1a1a"></div>
<div class="a" style="left:156.55px;top:140.5px;width:20.30px;height:11.4px;background:#1a1a1a"></div>
<div class="a" style="left:177.85px;top:140.5px;width:24.10px;height:11.4px;background:#1a1a1a"></div>
<span class="t" style="left:30px;top:142.1px"><span style="color:#c8c8c8">调节模式</span></span>
<span class="t" style="left:73px;top:142.1px"><span style="color:#4a9bea">整数型</span></span>
<div class="a" style="left:28.6px;top:158.7px;width:9.5px;height:1px;background:repeating-linear-gradient(90deg,#555 0 1px,transparent 1px 2.2px)"></div>
<div class="a" style="left:28.6px;top:161px;width:1px;height:13px;background:repeating-linear-gradient(#555 0 1px,transparent 1px 2.2px)"></div>
<svg style="left:23.6px;top:169.8px" width="11" height="11" viewBox="0 0 11 11"><path d="M4 4.5 L5.5 6.2 L7 4.5" stroke="#6a7ab0" stroke-width="0.8" fill="none"/></svg>
<span class="t" style="left:40.6px;top:154.1px;color:#c586e0;font-size:7.1px;">如果真</span>
<span class="t mono" style="left:66.6px;top:155.1px;color:#4a90d9">(</span>
<span class="t" style="left:69.4px;top:154.1px;color:#4a90d9;font-size:7.1px;">是否创建</span>
<span class="t mono" style="left:101.3px;top:155.1px;color:#a0a0a0">()</span>
<span class="t mono" style="left:112.5px;top:155.1px;color:#a0a0a0">=</span>
<span class="t" style="left:123px;top:154.1px;color:#35c0c0;font-size:7.1px;">真</span>
<span class="t mono" style="left:130.7px;top:155.1px;color:#a0a0a0">)</span>
<span class="t" style="left:40.6px;top:164.70000000000002px;color:#c586e0;font-size:7.1px;">返回</span>
<span class="t mono" style="left:59.1px;top:165.70000000000002px;color:#4a90d9">(</span>
<span class="t" style="left:62.2px;top:164.70000000000002px;color:#4a90d9;font-size:7.1px;">取窗句柄</span>
<span class="t mono" style="left:94.1px;top:165.70000000000002px;color:#a0a0a0">())</span>
<span class="t" style="left:28.1px;top:176.20000000000002px;color:#f4f4f4;font-size:7.1px;font-weight:bold;">回调地址</span>
<span class="t mono" style="left:60.3px;top:177.20000000000002px;color:#a0a0a0">=</span>
<span class="t" style="left:71px;top:176.20000000000002px;color:#6f6f73;font-size:7.1px;">操作回调</span>
<span class="t" style="left:28.1px;top:186.4px;color:#f4f4f4;font-size:7.1px;font-weight:bold;">音量大小</span>
<span class="t mono" style="left:60.3px;top:187.4px;color:#a0a0a0">=</span>
<span class="t" style="left:71px;top:186.4px;color:#6f6f73;font-size:7.1px;">音量位置</span>
<span class="t" style="left:28.1px;top:196.9px;color:#f4f4f4;font-size:7.1px;font-weight:bold;">控制模式</span>
<span class="t mono" style="left:60.3px;top:197.9px;color:#a0a0a0">=</span>
<span class="t" style="left:71px;top:196.9px;color:#6f6f73;font-size:7.1px;">调节模式</span>
<span class="t" style="left:27.8px;top:207.5px;color:#4a90d9;font-size:7.1px;">创建窗口</span>
<span class="t mono" style="left:60.1px;top:208.5px;color:#a0a0a0">()</span>
<span class="t" style="left:27.8px;top:218.3px;color:#c586e0;font-size:7.1px;">返回</span>
<span class="t mono" style="left:45.8px;top:219.3px;color:#4a90d9">(</span>
<span class="t" style="left:49.4px;top:218.3px;color:#4a90d9;font-size:7.1px;">取窗句柄</span>
<span class="t mono" style="left:81.6px;top:219.3px;color:#a0a0a0">())</span>
<div class="a" style="left:27px;top:231.8px;width:179px;height:50.3px;background:#5b5b5b"></div>
<span class="t" style="left:30px;top:234.0px;color:#f4f4f4">子程序名</span>
<span class="t" style="left:76.4px;top:234.0px;color:#f4f4f4">返回值类型</span>
<span class="t" style="left:119.5px;top:234.0px;color:#f4f4f4">公开</span>
<span class="t" style="left:140.9px;top:234.0px;color:#f4f4f4">易包</span>
<span class="t" style="left:162.2px;top:234.0px;color:#f4f4f4">备 注</span>
<div class="a" style="left:27.55px;top:245.0px;width:45.40px;height:11.4px;background:#1a1a1a"></div>
<div class="a" style="left:73.95px;top:245.0px;width:42.10px;height:11.4px;background:#1a1a1a"></div>
<div class="a" style="left:117.05px;top:245.0px;width:20.40px;height:11.4px;background:#1a1a1a"></div>
<div class="a" style="left:138.45px;top:245.0px;width:20.30px;height:11.4px;background:#1a1a1a"></div>
<div class="a" style="left:159.75px;top:245.0px;width:45.80px;height:11.4px;background:#1a1a1a"></div>
<span class="t" style="left:30px;top:246.6px"><span class="mono" style="color:#34d8a0;font-weight:bold;position:relative;top:0px">dllSetTimer</span></span>
<span class="t" style="left:119.5px;top:246.6px"><svg style="left:3.5px;top:1.5px" width="8" height="7" viewBox="0 0 8 7"><path d="M1 3 L3 5.2 L7 1" stroke="#e0443a" stroke-width="1.3" fill="none"/></svg></span>
<span class="t" style="left:30px;top:259.0px;color:#f4f4f4">参数名</span>
<span class="t" style="left:76.4px;top:259.0px;color:#f4f4f4">类 型</span>
<span class="t" style="left:119.5px;top:259.0px;color:#f4f4f4">参考</span>
<span class="t" style="left:140.9px;top:259.0px;color:#f4f4f4">可空</span>
<span class="t" style="left:162.2px;top:259.0px;color:#f4f4f4">数组</span>
<span class="t" style="left:183.7px;top:259.0px;color:#f4f4f4">备 注</span>
<div class="a" style="left:27.55px;top:270.0px;width:45.40px;height:11.4px;background:#1a1a1a"></div>
<div class="a" style="left:73.95px;top:270.0px;width:42.10px;height:11.4px;background:#1a1a1a"></div>
<div class="a" style="left:117.05px;top:270.0px;width:20.40px;height:11.4px;background:#1a1a1a"></div>
<div class="a" style="left:138.45px;top:270.0px;width:20.30px;height:11.4px;background:#1a1a1a"></div>
<div class="a" style="left:159.75px;top:270.0px;width:20.50px;height:11.4px;background:#1a1a1a"></div>
<div class="a" style="left:181.25px;top:270.0px;width:24.30px;height:11.4px;background:#1a1a1a"></div>
<span class="t" style="left:30px;top:271.6px"><span style="color:#c8c8c8">调节模式</span></span>
<span class="t" style="left:76.4px;top:271.6px"><span style="color:#4a9bea">整数型</span></span>
<span class="t" style="left:28.1px;top:283.9px;color:#f4f4f4;font-size:7.1px;font-weight:bold;">控制模式</span>
<span class="t mono" style="left:60.3px;top:284.9px;color:#a0a0a0">=</span>
<span class="t" style="left:71px;top:283.9px;color:#6f6f73;font-size:7.1px;">调节模式</span>
<div class="a" style="left:28.6px;top:299.4px;width:9.5px;height:1px;background:repeating-linear-gradient(90deg,#555 0 1px,transparent 1px 2.2px)"></div>
<span class="t" style="left:40.6px;top:294.79999999999995px;color:#c586e0;font-size:7.1px;">如果真</span>
<span class="t mono" style="left:66.9px;top:295.79999999999995px;color:#a0a0a0">(</span>
<span class="t" style="left:69.7px;top:294.79999999999995px;color:#6f6f73;font-size:7.1px;">调节模式</span>
<span class="t mono" style="left:102.0px;top:295.79999999999995px;color:#a0a0a0">=</span>
<span class="t mono" style="left:112.5px;top:295.79999999999995px;color:#e0643c">1</span>
<span class="t mono" style="left:116.3px;top:295.79999999999995px;color:#a0a0a0">)</span>
<div class="a" style="left:28.6px;top:319.7px;width:7px;height:1px;background:repeating-linear-gradient(90deg,#555 0 1px,transparent 1px 2.2px)"></div>
<span class="t" style="left:40.6px;top:315.09999999999997px;color:#c586e0;font-size:7.1px;">如果真</span>
<span class="t mono" style="left:66.9px;top:316.09999999999997px;color:#a0a0a0">(</span>
<span class="t" style="left:69.7px;top:315.09999999999997px;color:#6f6f73;font-size:7.1px;">调节模式</span>
<span class="t mono" style="left:102.0px;top:316.09999999999997px;color:#a0a0a0">=</span>
<span class="t mono" style="left:112.5px;top:316.09999999999997px;color:#e0643c">2</span>
<span class="t mono" style="left:116.3px;top:316.09999999999997px;color:#a0a0a0">)</span>
<div class="a" style="left:28.6px;top:302px;width:1px;height:16px;background:repeating-linear-gradient(#555 0 1px,transparent 1px 2.2px)"></div>
<svg style="left:31.5px;top:314.2px" width="11" height="11" viewBox="0 0 11 11"><path d="M4.5 3.8 L6.5 5.5 L4.5 7.2Z" fill="#5a6ab0"/></svg>
<span class="t" style="left:40.6px;top:305.2px;color:#f4f4f4;font-size:7.1px;font-weight:bold;">旋转按钮</span>
<span class="t mono" style="left:69.5px;top:306.2px;color:#a0a0a0">.</span>
<span class="t" style="left:73.4px;top:305.2px;color:#22d6ac;font-size:7.1px;font-weight:bold;">最大位置</span>
<span class="t mono" style="left:105.3px;top:306.2px;color:#a0a0a0">(</span>
<span class="t mono" style="left:108.7px;top:306.2px;color:#e0643c">1000</span>
<span class="t mono" style="left:124.3px;top:306.2px;color:#a0a0a0">)</span>
<div class="a" style="left:0;top:323px;width:608px;height:11px;background:#2d2d30"></div>
<div class="a" style="left:0;top:323px;width:608px;height:9.6px;background:#3e3e42"></div>
<div class="a" style="left:10.5px;top:325px;width:193.3px;height:5.6px;background:#6e6e6e"></div>
<svg style="left:-0.5px;top:322.2px" width="11" height="11" viewBox="0 0 11 11"><path d="M7 3 L4 5.5 L7 8Z" fill="#b0b0b0"/></svg>
<svg style="left:592.5px;top:322.2px" width="11" height="11" viewBox="0 0 11 11"><path d="M4 3.5 L6.5 5.5 L4 7.5Z" fill="#999"/></svg>
<div class="a" style="left:603.5px;top:326.5px;border:2.2px solid transparent;border-top:2.6px solid #999;width:0;height:0"></div>
</div>
<div id="bottom" class="a" style="left:0;top:365px;width:750px;height:95px;background:#2d2d30;overflow:hidden">
<div class="a" style="left:0;top:2.8px;width:239px;height:1px;background:#3a3a3e"></div>
<div class="a" style="left:238.5px;top:2.8px;width:1px;height:93px;background:#3f3f46"></div>
<span class="t" style="left:-2px;top:5.4px;">帮助提示</span>
<div class="a" style="left:30px;top:9px;width:175px;height:3px;background:repeating-linear-gradient(90deg,#46464a 0 1px,transparent 1px 2px);opacity:.3"></div>
<div class="a" style="left:207.9px;top:9px;border:2.5px solid transparent;border-top:3px solid #e0e0e0;width:0;height:0"></div>
<svg style="left:215.5px;top:4.1px" width="11" height="11" viewBox="0 0 11 11"><path d="M4.3 2.4 L6.7 2.4 L6.7 6 L4.3 6Z M3.6 6 L7.4 6 M5.5 6 L5.5 8.8" stroke="#e8e8e8" stroke-width="0.8" fill="none"/><path d="M6.2 2.4 L6.2 6" stroke="#e8e8e8" stroke-width="0.9"/></svg>
<svg style="left:226.1px;top:4.5px" width="11" height="11" viewBox="0 0 11 11"><path d="M2.9 2.9 L8.1 8.1 M8.1 2.9 L2.9 8.1" stroke="#e8e8e8" stroke-width="1.05"/></svg>
<div class="a" style="left:0;top:16.5px;width:238.5px;height:79px;background:#252526"></div>
<span class="t" style="left:7.5px;top:21.8px;">子程序名：<span style="letter-spacing:0.3px">DllLoading</span></span>
<span class="t" style="left:7.5px;top:35.6px;">返回值类型：整数型</span>
<span class="t" style="left:7.5px;top:49.4px;">参数<span style="letter-spacing:0.75px">&lt;1&gt;</span></span>
<span class="t" style="left:36.8px;top:49.4px;">的名称为</span>
<span class="t" style="left:70.4px;top:49.4px;">“操作回调”</span>
<span class="t" style="left:108.2px;top:49.4px;">，</span>
<span class="t" style="left:115.3px;top:49.4px;">类型为</span>
<span class="t" style="left:141.2px;top:49.4px;">“整数型”</span>
<span class="t" style="left:172.2px;top:49.4px;">。</span>
<span class="t" style="left:7.5px;top:63.2px;">参数<span style="letter-spacing:0.75px">&lt;2&gt;</span></span>
<span class="t" style="left:36.8px;top:63.2px;">的名称为</span>
<span class="t" style="left:70.4px;top:63.2px;">“音量位置”</span>
<span class="t" style="left:108.2px;top:63.2px;">，</span>
<span class="t" style="left:115.3px;top:63.2px;">类型为</span>
<span class="t" style="left:141.2px;top:63.2px;">“整数型”</span>
<span class="t" style="left:172.2px;top:63.2px;">。</span>
<span class="t" style="left:7.5px;top:77px;">参数<span style="letter-spacing:0.75px">&lt;3&gt;</span></span>
<span class="t" style="left:36.8px;top:77px;">的名称为</span>
<span class="t" style="left:70.4px;top:77px;">“调节模式”</span>
<span class="t" style="left:108.2px;top:77px;">，</span>
<span class="t" style="left:115.3px;top:77px;">类型为</span>
<span class="t" style="left:141.2px;top:77px;">“整数型”</span>
<span class="t" style="left:172.2px;top:77px;">。</span>
<div class="a" style="left:228.7px;top:16.5px;width:10px;height:79px;background:#3e3e42"></div>
<div class="a" style="left:231px;top:27px;width:5px;height:46px;background:#686868"></div>
<div class="a" style="left:230.5px;top:17.7px;border:3.1px solid transparent;border-bottom:3.6px solid #b4b4b4;width:0;height:0"></div>
<div class="a" style="left:230.5px;top:85px;border:3.1px solid transparent;border-top:3.6px solid #b4b4b4;width:0;height:0"></div>
<div class="a" style="left:0;top:92.5px;width:228.5px;height:3px;background:#3e3e42"></div>
<div class="a" style="left:30px;top:94px;width:150px;height:2px;background:#686868"></div>
<div class="a" style="left:243px;top:2.8px;width:507px;height:1px;background:#3a3a3e"></div>
<div class="a" style="left:242.5px;top:2.8px;width:1px;height:93px;background:#3f3f46"></div>
<span class="t" style="left:246px;top:5.4px;">调试输出</span>
<div class="a" style="left:278px;top:9px;width:444px;height:3px;background:repeating-linear-gradient(90deg,#46464a 0 1px,transparent 1px 2px);opacity:.3"></div>
<div class="a" style="left:724.5px;top:8.5px;border:2.5px solid transparent;border-top:3px solid #e0e0e0;width:0;height:0"></div>
<svg style="left:731.5px;top:3.7px" width="11" height="11" viewBox="0 0 11 11"><path d="M4.3 2.4 L6.7 2.4 L6.7 6 L4.3 6Z M3.6 6 L7.4 6 M5.5 6 L5.5 8.8" stroke="#e8e8e8" stroke-width="0.8" fill="none"/><path d="M6.2 2.4 L6.2 6" stroke="#e8e8e8" stroke-width="0.9"/></svg>
<svg style="left:741.9px;top:4.1px" width="11" height="11" viewBox="0 0 11 11"><path d="M2.9 2.9 L8.1 8.1 M8.1 2.9 L2.9 8.1" stroke="#e8e8e8" stroke-width="1.05"/></svg>
<div class="a" style="left:243px;top:31.5px;width:507px;height:64px;background:#252526"></div>
<svg style="left:246.0px;top:18.5px" width="11" height="11" viewBox="0 0 11 11"><path d="M2 2 L2 9 M9 2 L9 9" stroke="#9a9a9a" stroke-width="1" stroke-dasharray="1 1"/><path d="M4 3 L7 3 L7 5 L4 5Z" fill="#e8e8e8"/><path d="M5.5 5 L5.5 9 M4 7.5 L5.5 9 L7 7.5" stroke="#e8e8e8" stroke-width="0.9" fill="none"/></svg>
<svg style="left:261.5px;top:18.5px" width="11" height="11" viewBox="0 0 11 11"><path d="M2.5 3.5 L7 3.5 L7 9.5 L2.5 9.5Z" fill="none" stroke="#e8e8e8" stroke-width="0.9"/><path d="M4.5 3 L4.5 1.5 L9 1.5 L9 7.5 L7.5 7.5" fill="none" stroke="#e8e8e8" stroke-width="0.9"/></svg>
<svg style="left:275.0px;top:18.5px" width="11" height="11" viewBox="0 0 11 11"><path d="M4.5 3 L10 3 M2 5.2 L10 5.2 M2 7.4 L10 7.4 M2 9.6 L10 9.6" stroke="#e8e8e8" stroke-width="1"/><path d="M1 1 L3.6 3.6 M3.6 1 L1 3.6" stroke="#e0443a" stroke-width="1.1"/></svg>
<span class="t" style="left:245.9px;top:36.6px;">正在编译...</span>
<span class="t" style="left:245.9px;top:50.4px;">正在生成主程序入口代码</span>
<span class="t" style="left:245.9px;top:64.2px;">程序代码编译成功</span>
<span class="t" style="left:245.9px;top:78px;">正在封装易格式目的代码</span>
<span class="t" style="left:245.9px;top:91.8px;">开始运行被调试程序</span>
<div class="a" style="left:745.3px;top:31.5px;width:4.7px;height:64px;background:#3e3e42"></div>
<div class="a" style="left:747.4px;top:68.5px;width:2.6px;height:17px;background:#686868"></div>
<div class="a" style="left:746px;top:33.5px;border:2.4px solid transparent;border-bottom:3px solid #999;width:0;height:0"></div>
</div>
<div id="float">
<svg style="left:431.8px;top:71.3px" width="68" height="68" viewBox="-34 -34 68 68">
<polygon points="25.20,-0.44 12.98,21.60 -12.22,22.04 -25.20,0.44 -12.98,-21.60 12.22,-22.04" fill="#3a5b82" stroke="#3a5b82" stroke-width="9.6" stroke-linejoin="round"/>
<polygon points="-1.37,-26.16 21.97,-14.27 23.34,11.89 1.37,26.16 -21.97,14.27 -23.34,-11.89" fill="#d9572f" stroke="#d9572f" stroke-width="5.6" stroke-linejoin="round"/>
<circle r="22.3" fill="#fcfafa"/>
<circle r="19.5" fill="none" stroke="#7f8aa3" stroke-width="1.1" stroke-dasharray="0.7 1.343"/>
<circle r="16.4" fill="#f3eeee"/>
<path d="M -13.4 10.47 A 17 17 0 1 1 16.94 -1.48" fill="none" stroke="#e8902c" stroke-width="1.6"/>
<text x="0" y="3.2" text-anchor="middle" font-family="Liberation Sans, sans-serif" font-weight="bold" font-size="8.6" fill="#3c3c3c">0</text>
</svg>
<div class="a" style="left:464px;top:117.4px;width:92.3px;height:254.29999999999998px;background:#f3f3f3;border-radius:3.5px;box-shadow:0 0 0 0.6px #c9c9c9"></div>
<div class="a" style="left:464px;top:182px;width:92.3px;height:21.3px;background:#d9d9d9;"></div>
<div class="a" style="left:464.5px;top:139.2px;width:91.3px;height:0.8px;background:#d2d2d2"></div>
<div class="a" style="left:464.5px;top:161px;width:91.3px;height:0.8px;background:#d2d2d2"></div>
<div class="a" style="left:464.5px;top:266.2px;width:91.3px;height:0.8px;background:#d2d2d2"></div>
<div class="a" style="left:464.5px;top:349.4px;width:91.3px;height:0.8px;background:#d2d2d2"></div>
<span class="t" style="left:486px;top:123.8px;height:12px;line-height:12px;font-size:8.25px;color:#4c4c4c;font-weight:bold;color:#111">蚀龙战甲</span>
<span class="t" style="left:486px;top:145.3px;height:12px;line-height:12px;font-size:8.25px;color:#4c4c4c;">调音台&nbsp; F8</span>
<span class="t" style="left:486px;top:166.9px;height:12px;line-height:12px;font-size:8.25px;color:#4c4c4c;">工程管理</span>
<svg style="left:549px;top:169.0px" width="4" height="5.2" viewBox="0 0 4 5.2"><path d="M0.3 0 L3.6 2.6 L0.3 5.2Z" fill="#222"/></svg>
<span class="t" style="left:486px;top:187.9px;height:12px;line-height:12px;font-size:8.25px;color:#4c4c4c;">设置选项</span>
<svg style="left:549px;top:190.0px" width="4" height="5.2" viewBox="0 0 4 5.2"><path d="M0.3 0 L3.6 2.6 L0.3 5.2Z" fill="#222"/></svg>
<span class="t" style="left:486px;top:208.9px;height:12px;line-height:12px;font-size:8.25px;color:#4c4c4c;">用户中心</span>
<span class="t" style="left:486px;top:229.70000000000002px;height:12px;line-height:12px;font-size:8.25px;color:#4c4c4c;">修复关联</span>
<span class="t" style="left:486px;top:250.5px;height:12px;line-height:12px;font-size:8.25px;color:#4c4c4c;">录制唱片</span>
<span class="t" style="left:486px;top:272.1px;height:12px;line-height:12px;font-size:8.25px;color:#4c4c4c;">歌曲来源</span>
<svg style="left:549px;top:274.2px" width="4" height="5.2" viewBox="0 0 4 5.2"><path d="M0.3 0 L3.6 2.6 L0.3 5.2Z" fill="#222"/></svg>
<span class="t" style="left:486px;top:293.0px;height:12px;line-height:12px;font-size:8.25px;color:#4c4c4c;">官方客服</span>
<svg style="left:549px;top:295.09999999999997px" width="4" height="5.2" viewBox="0 0 4 5.2"><path d="M0.3 0 L3.6 2.6 L0.3 5.2Z" fill="#222"/></svg>
<span class="t" style="left:486px;top:313.6px;height:12px;line-height:12px;font-size:8.25px;color:#4c4c4c;">官方网站</span>
<span class="t" style="left:486px;top:334.2px;height:12px;line-height:12px;font-size:8.25px;color:#4c4c4c;">关于</span>
<span class="t" style="left:486px;top:355.7px;height:12px;line-height:12px;font-size:8.25px;color:#4c4c4c;">退出</span>
<svg style="left:467.3px;top:122.5px" width="12" height="12" viewBox="0 0 12 12"><path d="M2 2.5 L2 9.5 M4 2.5 L4 9.5" stroke="#222" stroke-width="0.9"/><path d="M6 2.8 L9.5 2.8 L9.5 5 L6 5" stroke="#222" stroke-width="0.9" fill="none"/><circle cx="8" cy="8" r="1.8" fill="none" stroke="#222" stroke-width="1.2"/></svg>
<svg style="left:467.3px;top:144.0px" width="12" height="12" viewBox="0 0 12 12"><rect x="0.3" y="2.2" width="11.4" height="7.2" rx="1" fill="#38ab98" stroke="#9aa" stroke-width="0.5"/><rect x="0.8" y="2.7" width="10.4" height="1.6" fill="#e4efee"/><path d="M1.6 7.6 L10.6 7.6" stroke="#fff" stroke-width="0.9" stroke-dasharray="0.9 0.9"/><path d="M2 10.2 L4 10.2 M8 10.2 L10 10.2" stroke="#8a9aa0" stroke-width="0.8"/></svg>
<svg style="left:467.3px;top:165.6px" width="12" height="12" viewBox="0 0 12 12"><g fill="#f26a22"><rect x="2" y="1.6" width="3.6" height="3.8" rx="1.4"/><rect x="6.4" y="1.6" width="3.6" height="3.8" rx="1.4"/><rect x="2" y="6.4" width="3.6" height="3.8" rx="1.4"/><rect x="6.4" y="6.4" width="3.6" height="3.8" rx="1.4"/></g></svg>
<svg style="left:467.3px;top:186.6px" width="12" height="12" viewBox="0 0 12 12"><path d="M6 1.2 L10.3 3.6 L10.3 8.4 L6 10.8 L1.7 8.4 L1.7 3.6Z" fill="none" stroke="#999" stroke-width="0.8"/><circle cx="6" cy="6" r="1.7" fill="none" stroke="#999" stroke-width="0.8"/></svg>
<svg style="left:467.3px;top:207.6px" width="12" height="12" viewBox="0 0 12 12"><circle cx="6" cy="3.3" r="2.2" fill="#2ec08a"/><path d="M1.3 11 C1.6 5.8 10.4 5.8 10.7 11" fill="none" stroke="#2ec08a" stroke-width="1.1"/></svg>
<svg style="left:467.3px;top:228.4px" width="12" height="12" viewBox="0 0 12 12"><path d="M6 4.2 L11 6.7 L6 9.2 L1 6.7Z" fill="#e0302a"/><path d="M1 8.6 L6 11 L11 8.6" fill="none" stroke="#2f8cf0" stroke-width="1"/><path d="M6 0.8 L11 3.3 L6 5.8 L1 3.3Z" fill="#f3f3f3" stroke="#2f8cf0" stroke-width="1"/></svg>
<svg style="left:467.3px;top:249.2px" width="12" height="12" viewBox="0 0 12 12"><circle cx="5.6" cy="6.4" r="4.4" fill="#47c6ea"/><circle cx="5.6" cy="6.4" r="1.9" fill="none" stroke="#e8f8ff" stroke-width="0.8"/><circle cx="9.6" cy="2.4" r="1.5" fill="#4ad6b0"/></svg>
<svg style="left:467.3px;top:270.8px" width="12" height="12" viewBox="0 0 12 12"><circle cx="5.4" cy="6.6" r="4.5" fill="#18b24a"/><path d="M7.5 3 L9.8 1.2" stroke="#18b24a" stroke-width="1.4"/><circle cx="10" cy="1.6" r="0.9" fill="#18b24a"/></svg>
<svg style="left:467.3px;top:291.7px" width="12" height="12" viewBox="0 0 12 12"><path d="M9.6 8.6 A4.6 4.6 0 1 1 10.6 5.6" fill="none" stroke="#2f8cf0" stroke-width="1"/><circle cx="4.6" cy="5.6" r="0.8" fill="#f59a23"/><circle cx="7.2" cy="5.6" r="0.8" fill="#f59a23"/><path d="M10.6 5 L10.6 8" stroke="#2f8cf0" stroke-width="1.2"/></svg>
<svg style="left:467.3px;top:312.3px" width="12" height="12" viewBox="0 0 12 12"><circle cx="6" cy="6" r="4.3" fill="none" stroke="#2f8cf0" stroke-width="1"/><path d="M0.6 8.4 C3 9.6 9.6 6.4 11.4 3.4" fill="none" stroke="#2f8cf0" stroke-width="1"/></svg>
<svg style="left:467.3px;top:332.9px" width="12" height="12" viewBox="0 0 12 12"><path d="M2.4 5 C2.4 0.4 9.4 0.4 9.4 5 L9.4 8 C9.4 12 2.4 12 2.4 8Z" fill="none" stroke="#2f8cf0" stroke-width="1"/><path d="M4.4 7.5 L4.4 4.4 C4.4 3.2 6 3.2 6 4.4 L6 6 C8 6 8 7 8 9" fill="none" stroke="#2f8cf0" stroke-width="0.9"/></svg>
<svg style="left:467.3px;top:354.4px" width="12" height="12" viewBox="0 0 12 12"><path d="M5 2 L1.6 2 L1.6 10 L5 10" fill="none" stroke="#dc2a1e" stroke-width="1.6"/><path d="M4.4 4.6 L7.4 4.6 L7.4 2.4 L11.4 6 L7.4 9.6 L7.4 7.4 L4.4 7.4Z" fill="#dc2a1e"/></svg>
<div class="a" style="left:557.2px;top:181.8px;width:91.2px;height:149.2px;background:#f3f3f3;border-radius:3.5px;box-shadow:0 0 0 0.6px #c9c9c9"></div>
<div class="a" style="left:557.2px;top:181.8px;width:91.2px;height:21.6px;background:#d9d9d9;border-radius:3.5px 3.5px 0 0"></div>
<div class="a" style="left:557.7px;top:245.2px;width:90.2px;height:0.8px;background:#d2d2d2"></div>
<div class="a" style="left:557.7px;top:287.6px;width:90.2px;height:0.8px;background:#d2d2d2"></div>
<span class="t" style="left:579px;top:187.9px;height:12px;line-height:12px;font-size:8.25px;color:#4c4c4c;">系统设置</span>
<span class="t" style="left:579px;top:209.3px;height:12px;line-height:12px;font-size:8.25px;color:#4c4c4c;">设备管理</span>
<span class="t" style="left:579px;top:230.10000000000002px;height:12px;line-height:12px;font-size:8.25px;color:#4c4c4c;">出厂设置</span>
<span class="t" style="left:579px;top:251.20000000000002px;height:12px;line-height:12px;font-size:8.25px;color:#4c4c4c;">悬浮模式</span>
<span class="t" style="left:579px;top:272.3px;height:12px;line-height:12px;font-size:8.25px;color:#4c4c4c;">共同模式</span>
<span class="t" style="left:579px;top:293.6px;height:12px;line-height:12px;font-size:8.25px;color:#4c4c4c;">调节话筒</span>
<span class="t" style="left:579px;top:314.3px;height:12px;line-height:12px;font-size:8.25px;color:#4c4c4c;">调节伴奏</span>
<svg style="left:560.0px;top:186.6px" width="12" height="12" viewBox="0 0 12 12"><path d="M6 0.8 L10.5 3.4 L10.5 8.6 L6 11.2 L1.5 8.6 L1.5 3.4Z" fill="none" stroke="#222" stroke-width="1" stroke-linejoin="round"/><circle cx="6" cy="6" r="2.5" fill="none" stroke="#222" stroke-width="0.9"/><circle cx="6" cy="6" r="1.5" fill="#2f8cf0"/></svg>
<svg style="left:560.0px;top:208.0px" width="12" height="12" viewBox="0 0 12 12"><path d="M3.4 2.2 L10 2.2 Q11 2.2 11 3.2 L11 8.8 Q11 9.8 10 9.8 L2.4 9.8 Q1.4 9.8 1.4 8.8 L1.4 4.2Z" fill="none" stroke="#1a1a1a" stroke-width="1.3"/><path d="M1.6 5.4 L7.6 5.4 L7.6 8 L3 8" fill="none" stroke="#1a1a1a" stroke-width="1"/></svg>
<svg style="left:560.0px;top:228.8px" width="12" height="12" viewBox="0 0 12 12"><path d="M8.6 1.4 L1.2 1.4 L1.2 8.4 L4.4 8.4 M2.4 10.4 L4.6 10.4 M3.4 8.6 L3.4 10.4" fill="none" stroke="#777" stroke-width="0.9"/><path d="M5.6 6 A2.8 2.8 0 0 1 10.8 5 M11 7.6 A2.8 2.8 0 0 1 5.8 8.6" fill="none" stroke="#f07a3a" stroke-width="1"/><path d="M11.4 3.6 L10.9 5.6 L9.2 4.8Z M5.2 10 L5.7 8 L7.4 8.8Z" fill="#f07a3a"/></svg>
<svg style="left:560.0px;top:249.9px" width="12" height="12" viewBox="0 0 12 12"><path d="M6 2 L10.4 4.4 L6 6.8 L1.6 4.4Z" fill="none" stroke="#2f74d6" stroke-width="1.15"/><path d="M1.8 7 L6 9.4 L10.2 7" fill="none" stroke="#2f74d6" stroke-width="1.15"/></svg>
<svg style="left:560.0px;top:271.0px" width="12" height="12" viewBox="0 0 12 12"><path d="M6 2 L10.4 4.4 L6 6.8 L1.6 4.4Z" fill="none" stroke="#2f74d6" stroke-width="1.15"/><path d="M1.8 7 L6 9.4 L10.2 7" fill="none" stroke="#2f74d6" stroke-width="1.15"/></svg>
<svg style="left:560.0px;top:292.3px" width="12" height="12" viewBox="0 0 12 12"><path d="M6 2 L10.4 4.4 L6 6.8 L1.6 4.4Z" fill="none" stroke="#2f74d6" stroke-width="1.15"/><path d="M1.8 7 L6 9.4 L10.2 7" fill="none" stroke="#2f74d6" stroke-width="1.15"/></svg>
<svg style="left:560.0px;top:313.0px" width="12" height="12" viewBox="0 0 12 12"><path d="M6 2 L10.4 4.4 L6 6.8 L1.6 4.4Z" fill="none" stroke="#2f74d6" stroke-width="1.15"/><path d="M1.8 7 L6 9.4 L10.2 7" fill="none" stroke="#2f74d6" stroke-width="1.15"/></svg>
</div>
</body></html>
